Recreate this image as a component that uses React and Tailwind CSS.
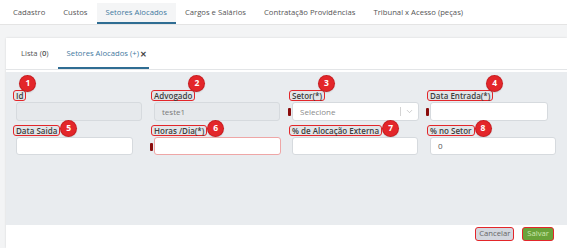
import { ChevronDown } from 'lucide-react'

const TOP_TABS = [
  'Cadastro',
  'Custos',
  'Setores Alocados',
  'Cargos e Salários',
  'Contratação Providências',
  'Tribunal x Acesso (peças)',
]

const ROWS = [
  [
    { n: 1, label: 'Id', w: 'w-[126px]', disabled: true },
    { n: 2, label: 'Advogado', w: 'w-[126px]', disabled: true, value: 'teste1' },
    { n: 3, label: 'Setor(*)', w: 'w-[127px]', select: true, req: true },
    { n: 4, label: 'Data Entrada(*)', w: 'w-[118px]', req: true },
  ],
  [
    { n: 5, label: 'Data Saida', w: 'w-[117px]' },
    { n: 6, label: 'Horas /Dia(*)', w: 'w-[127px]', req: true, invalid: true },
    { n: 7, label: '% de Alocação Externa', w: 'w-[126px]' },
    { n: 8, label: '% no Setor', w: 'w-[126px]', value: '0' },
  ],
]

function Badge({ n, row }) {
  const pos = row === 0 ? 'left-[calc(100%-6px)] -top-[14px]' : 'left-[calc(100%+1px)] -top-[4px]'
  return (
    <span className={`absolute ${pos} w-[15px] h-[15px] rounded-full bg-[#e3262a] shadow-[0_0_0_1px_#c81e22,0_1px_2px_rgba(0,0,0,0.35)] text-white text-[8.5px] font-bold flex items-center justify-center leading-none`}>
      {n}
    </span>
  )
}

function Field({ f, row }) {
  return (
    <div className="flex flex-col items-start">
      <div className="relative flex h-[11px] mb-[1px]">
        <span className="flex h-[11px] items-center px-[2px] border-[1.5px] border-[#e3262a] rounded-[3px] bg-[#e2e5e8] text-[8px] font-semibold text-[#3d3d3d] leading-none whitespace-nowrap">
          {f.label}
        </span>
        <Badge n={f.n} row={row} />
      </div>
      <div className="relative ml-[3px]">
        {f.req && (
          <span className="absolute -left-[4px] top-[6px] w-[3px] h-[8px] rounded-[1px] bg-[#8a0b0b]" />
        )}
        {f.select ? (
          <div className={`${f.w} h-[19px] bg-white border border-[#d6dade] rounded-[3px] flex items-center pl-[7px] pr-[2px]`}>
            <span className="text-[8px] text-[#8a8a8a] flex-1">Selecione</span>
            <span className="w-px h-[9px] bg-[#d4d4d4] mr-[4px]" />
            <ChevronDown size={9} strokeWidth={1.5} className="text-[#a9a9a9] mr-[2px]" />
          </div>
        ) : (
          <div
            className={`${f.w} ${row === 0 ? 'h-[19px]' : 'h-[18px]'} rounded-[3px] border flex items-center pl-[7px] text-[8px] ${
              f.disabled
                ? 'bg-[#e6e9ec] border-[#d6dade] text-[#7a7a7a]'
                : f.invalid
                  ? 'bg-white border-[#eea6a6] text-[#555]'
                  : 'bg-white border-[#d6dade] text-[#555]'
            }`}
          >
            {f.value}
          </div>
        )}
      </div>
    </div>
  )
}

export default function App() {
  return (
    <div className="w-[567px] h-[248px] overflow-hidden bg-[#f3f4f5] font-['Open_Sans',sans-serif] flex flex-col">
      {/* abas principais */}
      <div className="h-[25px] bg-white border-b border-[#e4e4e4] flex items-end pl-[4px] shrink-0">
        {TOP_TABS.map(t => (
          <div
            key={t}
            className={`h-[21px] px-[9px] flex items-center text-[7.7px] whitespace-nowrap ${
              t === 'Setores Alocados'
                ? 'bg-[#f4f5f6] text-[#3f79a0] border-b-2 border-[#2f6d93]'
                : 'text-[#555] border-b-2 border-transparent'
            }`}
          >
            {t}
          </div>
        ))}
      </div>

      <div className="h-[13px] shrink-0" />

      {/* card */}
      <div className="flex-1 ml-[6px] bg-white shadow-[0_0_2px_rgba(0,0,0,0.12)] flex flex-col">
        <div className="h-[32px] border-b border-[#e3e5e7] flex items-end pl-[6px] shrink-0">
          <div className="h-[29px] px-[9px] flex items-center text-[7.7px] text-[#555] border-b-2 border-transparent">
            Lista (<span className="font-semibold">0</span>)
          </div>
          <div className="h-[29px] pl-[9px] pr-[2px] flex items-center text-[7.7px] text-[#3f79a0] border-b-2 border-[#2f6d93]">
            Setores Alocados (+)
            <span className="text-[#444] text-[8px] font-bold ml-[1px]">✕</span>
          </div>
        </div>

        {/* formulário */}
        <div className="mt-[2px] h-[153px] bg-[#e9ecef] pl-[7px] pt-[18px] shrink-0">
          <div className="flex flex-col gap-[4px]">
            {ROWS.map((row, ri) => (
              <div key={ri} className="grid grid-cols-[138px_138px_138px_138px]">
                {row.map(f => <Field key={f.n} f={f} row={ri} />)}
              </div>
            ))}
          </div>
        </div>

        {/* rodapé */}
        <div className="flex-1 flex items-start justify-end gap-[8px] pr-[13px] pt-[2px]">
          <button className="h-[14px] px-[3px] rounded-[3px] bg-[#d3d7de] border-[1.5px] border-[#e3262a] text-[7.7px] text-[#666] leading-none">
            Cancelar
          </button>
          <button className="h-[14px] px-[4px] rounded-[3px] bg-[#6aa23a] border-[1.5px] border-[#e3262a] text-[7.7px] text-[#cfe8b0] leading-none">
            Salvar
          </button>
        </div>
      </div>
    </div>
  )
}
